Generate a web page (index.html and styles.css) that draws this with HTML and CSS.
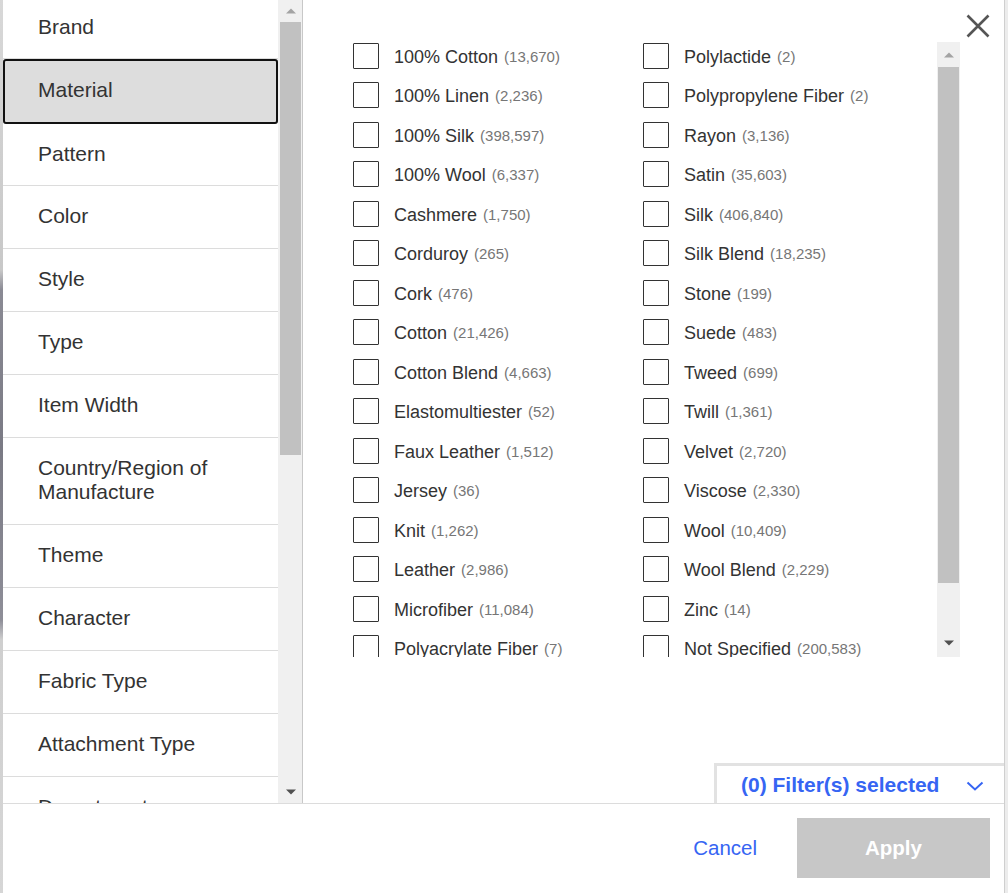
FILE: index.html
```html
<!DOCTYPE html>
<html lang="en">
<head>
<meta charset="utf-8">
<title>Filters</title>
<link rel="stylesheet" href="styles.css">
</head>
<body>
<div class="page">
  <div class="backdrop-strip"></div>
  <div class="modal">
    <div class="main">
      <div class="left">
        <div class="cat-viewport">
          <ul class="cats">
            <li class="cat first">Brand</li>
            <li class="cat selected">Material</li>
            <li class="cat after-selected">Pattern</li>
            <li class="cat">Color</li>
            <li class="cat">Style</li>
            <li class="cat">Type</li>
            <li class="cat">Item Width</li>
            <li class="cat tall">Country/Region of<br>Manufacture</li>
            <li class="cat">Theme</li>
            <li class="cat">Character</li>
            <li class="cat">Fabric Type</li>
            <li class="cat">Attachment Type</li>
            <li class="cat">Department</li>
          </ul>
        </div>
        <div class="vscroll left-scroll">
          <div class="arrow up"></div>
          <div class="thumb left-thumb"></div>
          <div class="spacer"></div>
          <div class="arrow down"></div>
        </div>
      </div>
      <div class="right">
        <button class="close" aria-label="Close">
          <svg width="24" height="24" viewBox="0 0 24 24"><path d="M1.5 1.5 L22.5 22.5 M22.5 1.5 L1.5 22.5" stroke="#555" stroke-width="2.6" fill="none"/></svg>
        </button>
        <div class="opts-wrap">
          <div class="opts-viewport">
            <div class="opts">
              <div class="col">
                <label class="opt"><span class="box"></span><span class="name">100% Cotton</span><span class="count">(13,670)</span></label>
                <label class="opt"><span class="box"></span><span class="name">100% Linen</span><span class="count">(2,236)</span></label>
                <label class="opt"><span class="box"></span><span class="name">100% Silk</span><span class="count">(398,597)</span></label>
                <label class="opt"><span class="box"></span><span class="name">100% Wool</span><span class="count">(6,337)</span></label>
                <label class="opt"><span class="box"></span><span class="name">Cashmere</span><span class="count">(1,750)</span></label>
                <label class="opt"><span class="box"></span><span class="name">Corduroy</span><span class="count">(265)</span></label>
                <label class="opt"><span class="box"></span><span class="name">Cork</span><span class="count">(476)</span></label>
                <label class="opt"><span class="box"></span><span class="name">Cotton</span><span class="count">(21,426)</span></label>
                <label class="opt"><span class="box"></span><span class="name">Cotton Blend</span><span class="count">(4,663)</span></label>
                <label class="opt"><span class="box"></span><span class="name">Elastomultiester</span><span class="count">(52)</span></label>
                <label class="opt"><span class="box"></span><span class="name">Faux Leather</span><span class="count">(1,512)</span></label>
                <label class="opt"><span class="box"></span><span class="name">Jersey</span><span class="count">(36)</span></label>
                <label class="opt"><span class="box"></span><span class="name">Knit</span><span class="count">(1,262)</span></label>
                <label class="opt"><span class="box"></span><span class="name">Leather</span><span class="count">(2,986)</span></label>
                <label class="opt"><span class="box"></span><span class="name">Microfiber</span><span class="count">(11,084)</span></label>
                <label class="opt"><span class="box"></span><span class="name">Polyacrylate Fiber</span><span class="count">(7)</span></label>
              </div>
              <div class="col">
                <label class="opt"><span class="box"></span><span class="name">Polylactide</span><span class="count">(2)</span></label>
                <label class="opt"><span class="box"></span><span class="name">Polypropylene Fiber</span><span class="count">(2)</span></label>
                <label class="opt"><span class="box"></span><span class="name">Rayon</span><span class="count">(3,136)</span></label>
                <label class="opt"><span class="box"></span><span class="name">Satin</span><span class="count">(35,603)</span></label>
                <label class="opt"><span class="box"></span><span class="name">Silk</span><span class="count">(406,840)</span></label>
                <label class="opt"><span class="box"></span><span class="name">Silk Blend</span><span class="count">(18,235)</span></label>
                <label class="opt"><span class="box"></span><span class="name">Stone</span><span class="count">(199)</span></label>
                <label class="opt"><span class="box"></span><span class="name">Suede</span><span class="count">(483)</span></label>
                <label class="opt"><span class="box"></span><span class="name">Tweed</span><span class="count">(699)</span></label>
                <label class="opt"><span class="box"></span><span class="name">Twill</span><span class="count">(1,361)</span></label>
                <label class="opt"><span class="box"></span><span class="name">Velvet</span><span class="count">(2,720)</span></label>
                <label class="opt"><span class="box"></span><span class="name">Viscose</span><span class="count">(2,330)</span></label>
                <label class="opt"><span class="box"></span><span class="name">Wool</span><span class="count">(10,409)</span></label>
                <label class="opt"><span class="box"></span><span class="name">Wool Blend</span><span class="count">(2,229)</span></label>
                <label class="opt"><span class="box"></span><span class="name">Zinc</span><span class="count">(14)</span></label>
                <label class="opt"><span class="box"></span><span class="name">Not Specified</span><span class="count">(200,583)</span></label>
              </div>
            </div>
          </div>
          <div class="vscroll right-scroll">
            <div class="arrow up"></div>
            <div class="thumb right-thumb"></div>
            <div class="spacer"></div>
            <div class="arrow down"></div>
          </div>
        </div>
        <div class="grow"></div>
        <div class="selected-bar">
          <span class="selected-text">(0) Filter(s) selected</span>
          <svg class="chev" width="18" height="12" viewBox="0 0 18 12"><path d="M1.5 2.5 L9 9.5 L16.5 2.5" stroke="#3665f3" stroke-width="2" fill="none"/></svg>
        </div>
      </div>
    </div>
    <div class="footer">
      <button class="cancel">Cancel</button>
      <button class="apply">Apply</button>
    </div>
  </div>
  <div class="backdrop-right"></div>
</div>
</body>
</html>
```

FILE: styles.css
```css
* { box-sizing: border-box; }
html, body { margin: 0; padding: 0; }
body {
  width: 1008px;
  height: 893px;
  overflow: hidden;
  font-family: "Liberation Sans", Arial, sans-serif;
  color: #333;
  background: #fff;
}
.page {
  display: flex;
  height: 893px;
}
.backdrop-strip {
  width: 3px;
  flex: none;
  background: linear-gradient(to bottom, #d8d8d8 0, #c8c8c8 270px, #8a8a94 290px, #7a7a84 450px, #8e8e98 620px, #cfcfcf 640px, #d6d6d6 100%);
}
.backdrop-right {
  width: 3px;
  flex: none;
  background: #ececec;
}
.modal {
  width: 1002px;
  flex: none;
  display: flex;
  flex-direction: column;
  background: #fff;
  border-right: 1px solid #cfcfcf;
}
.main {
  height: 803px;
  display: flex;
  flex: none;
}
.left {
  width: 300px;
  flex: none;
  display: flex;
  border-right: 1px solid #c8c8c8;
}
.cat-viewport {
  width: 275px;
  overflow: hidden;
  flex: none;
}
.cats {
  list-style: none;
  margin: -4px 0 0 0;
  padding: 0;
}
.cat {
  height: 63px;
  display: flex;
  align-items: center;
  padding-left: 35px;
  padding-bottom: 2px;
  font-size: 21px;
  line-height: 24px;
  color: #333;
  border-bottom: 1px solid #dcdcdc;
}
.cat.first { padding-bottom: 0; }
.cat.selected {
  height: 65px;
  background: #dddddd;
  border: 2px solid #111;
  border-radius: 3px;
  padding-left: 33px;
  padding-bottom: 3px;
}
.cat.after-selected { height: 62px; }
.cat.tall { height: 87px; }

.vscroll {
  display: flex;
  flex-direction: column;
  align-items: center;
  background: #f0f0f0;
  flex: none;
}
.left-scroll {
  width: 24px;
  padding: 0 1px 0 2px;
}
.arrow {
  height: 22px;
  width: 100%;
  flex: none;
  position: relative;
}
.arrow::after {
  content: "";
  position: absolute;
  left: 50%;
  top: 50%;
  width: 0;
  height: 0;
  border-left: 5px solid transparent;
  border-right: 5px solid transparent;
  transform: translate(-50%, -50%);
}
.arrow.up::after { border-bottom: 5px solid #a3a3a3; }
.arrow.down::after { border-top: 5px solid #505050; }
.thumb {
  width: 100%;
  background: #c1c1c1;
  flex: none;
}
.left-thumb { height: 433px; }
.spacer { flex: 1; }

.right {
  flex: 1;
  display: flex;
  flex-direction: column;
  position: relative;
}
.close {
  position: absolute;
  top: 13px;
  right: 13px;
  width: 26px;
  height: 26px;
  padding: 1px;
  border: 0;
  background: none;
  cursor: pointer;
}
.close svg { display: block; }
.opts-wrap {
  margin: 42px 0 0 40px;
  width: 617px;
  height: 615px;
  display: flex;
  flex: none;
}
.opts-viewport {
  flex: 1;
  overflow: hidden;
}
.opts {
  display: flex;
  padding-left: 10px;
}
.col {
  width: 290px;
  display: flex;
  flex-direction: column;
}
.opt {
  height: 39.47px;
  display: flex;
  align-items: flex-start;
  flex: none;
  white-space: nowrap;
}
.box {
  width: 26px;
  height: 26px;
  margin-top: 1px;
  border: 1.5px solid #333;
  border-radius: 1px;
  flex: none;
  margin-right: 15px;
}
.name {
  font-size: 18px;
  line-height: 30px;
  color: #333;
}
.count {
  font-size: 15px;
  line-height: 30px;
  color: #767676;
  margin-left: 6px;
}
.right-scroll {
  width: 23px;
  height: 615px;
  padding: 0 1px;
}
.right-thumb { height: 516px; }
.right-scroll .arrow { height: 25px; }
.right-scroll .arrow.down { height: 28px; }

.grow { flex: 1; }
.selected-bar {
  align-self: flex-end;
  width: 290px;
  height: 40px;
  border-top: 3px solid #e2e2e2;
  border-left: 3px solid #e2e2e2;
  display: flex;
  align-items: center;
  padding-left: 24px;
  padding-right: 20px;
  justify-content: space-between;
}
.selected-text {
  font-size: 21px;
  font-weight: bold;
  color: #3665f3;
}
.chev { display: block; margin-top: 2px; }

.footer {
  flex: 1;
  border-top: 1px solid #dcdcdc;
  display: flex;
  align-items: flex-start;
  justify-content: flex-end;
  padding: 14px 14px 0 0;
}
.cancel {
  border: 0;
  background: none;
  font-family: "Liberation Sans", Arial, sans-serif;
  font-size: 20.5px;
  color: #3665f3;
  height: 59px;
  padding: 0;
  margin-right: 40px;
  cursor: pointer;
}
.apply {
  width: 193px;
  height: 60px;
  padding-top: 0;
  border: 0;
  background: #c7c7c7;
  color: #fff;
  font-family: "Liberation Sans", Arial, sans-serif;
  font-size: 20.5px;
  font-weight: bold;
  cursor: default;
}
```
